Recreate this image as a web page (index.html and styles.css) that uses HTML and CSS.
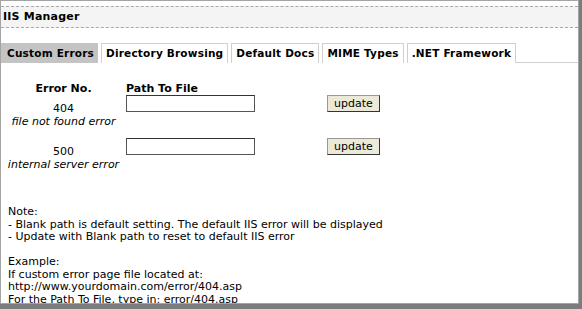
FILE: index.html
```html
<!DOCTYPE html>
<html lang="en">
<head>
<meta charset="UTF-8">
<title>IIS Manager</title>
<link rel="stylesheet" href="styles.css">
</head>
<body>
<div class="shadow">
  <div class="panel">
    <div class="panel-title">IIS Manager</div>
    <div class="tabs">
      <div class="tab active">Custom Errors</div>
      <div class="tab">Directory Browsing</div>
      <div class="tab">Default Docs</div>
      <div class="tab">MIME Types</div>
      <div class="tab">.NET Framework</div>
      <div class="tab-rest"></div>
    </div>
    <form class="errors">
      <div class="head code">Error No.</div>
      <div class="head">Path To File</div>
      <div></div>

      <div class="code">404<br><i>file not found error</i></div>
      <div><input class="path" type="text"></div>
      <div><button class="update" type="button">update</button></div>

      <div class="code">500<br><i>internal server error</i></div>
      <div><input class="path" type="text"></div>
      <div><button class="update" type="button">update</button></div>
    </form>
    <div class="note">
      Note:<br>
      - Blank path is default setting. The default IIS error will be displayed<br>
      - Update with Blank path to reset to default IIS error<br>
      <br>
      Example:<br>
      If custom error page file located at:<br>
      http://www.yourdomain.com/error/404.asp<br>
      For the Path To File, type in: error/404.asp
    </div>
  </div>
</div>
</body>
</html>
```

FILE: styles.css
```css
body {
  margin: 0;
  font-family: "DejaVu Sans", Verdana, sans-serif;
  font-size: 11px;
  color: #000;
  background: #fff;
}
.shadow {
  width: 579px;
  height: 304px;
  background-color: #7c7c7c;
  padding: 0 3px 5px 0;
}
.panel {
  box-sizing: border-box;
  height: 100%;
  background-color: white;
  border: 1px solid #a4a4a4;
  overflow: hidden;
}
.panel-title {
  margin-top: 5px;
  height: 20px;
  line-height: 20px;
  padding-left: 2px;
  font-weight: bold;
  letter-spacing: 0.2px;
  background-color: #f4f4f4;
  border-top: 1px dashed #a8a8a8;
  border-bottom: 1px dashed #a8a8a8;
}
.tabs {
  display: flex;
  margin-top: 15px;
  height: 20px;
}
.tab {
  box-sizing: border-box;
  height: 20px;
  line-height: 18px;
  padding: 0 4px;
  margin-right: 3px;
  font-size: 10.5px;
  font-weight: bold;
  letter-spacing: 0.2px;
  border: 1px solid #d0d0d0;
  border-bottom: none;
}
.tab.active {
  background-color: #c4c4c4;
  border-color: #c4c4c4;
  padding: 0 3px 0 5px;
}
.tab-rest {
  flex: 1;
  border-bottom: 1px solid #d0d0d0;
  margin-left: -3px;
}
.errors {
  display: grid;
  grid-template-columns: 125px 201px auto;
  grid-template-rows: 13px 43px 43px;
  margin: 19px 0 0 0;
}
.head {
  font-weight: bold;
  line-height: 13px;
}
.code {
  text-align: center;
  line-height: 13px;
}
.errors .code:not(.head) {
  padding-top: 7px;
}
.path {
  box-sizing: border-box;
  width: 129px;
  height: 17px;
  margin: 0;
  border: 1px solid #555;
  border-top-color: #333;
  padding: 0;
}
.update {
  box-sizing: border-box;
  height: 17px;
  padding: 0 6px;
  font-family: "DejaVu Sans", Verdana, sans-serif;
  font-size: 11px;
  background-color: #ece9d8;
  border: 1px solid #333;
  border-top-color: #999;
  border-left-color: #999;
}
.note {
  margin: 25px 0 0 7px;
  line-height: 12.5px;
}
```
